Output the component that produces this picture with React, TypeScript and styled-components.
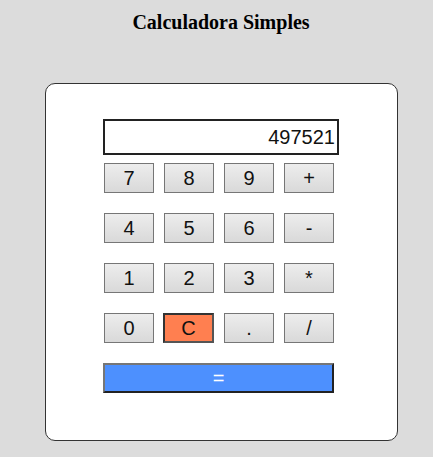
import React from "react";
import styled, { createGlobalStyle } from "styled-components";

const Global = createGlobalStyle`
  html, body { margin: 0; padding: 0; background: #dcdcdc; }
  body { font-family: "Liberation Serif", "Times New Roman", serif; }
`;

const Page = styled.div`
  width: 433px;
  height: 457px;
  display: flex;
  flex-direction: column;
  align-items: flex-start;
`;

const Title = styled.h3`
  align-self: stretch;
  margin: 11px 0 0 0;
  padding-left: 9px;
  height: 22px;
  line-height: 22px;
  text-align: center;
  font-family: "Liberation Serif", "Times New Roman", serif;
  font-weight: bold;
  font-size: 20px;
  color: #000;
`;

const Card = styled.div`
  box-sizing: border-box;
  margin: 50px 0 0 45px;
  width: 353px;
  height: 358px;
  background: #fff;
  border: 1px solid #333;
  border-radius: 10px;
  padding: 35px 0 0 57px;
  display: flex;
  flex-direction: column;
  align-items: flex-start;
`;

const Display = styled.div`
  box-sizing: border-box;
  width: 236px;
  height: 36px;
  border: 2px solid #222;
  padding: 0 2px 0 0;
  display: flex;
  align-items: center;
  justify-content: flex-end;
  font-family: "Liberation Sans", Arial, sans-serif;
  font-size: 20px;
  color: #111;
`;

const Keys = styled.div`
  margin: 8px 0 0 1px;
  display: grid;
  grid-template-columns: repeat(4, 50px);
  grid-auto-rows: 30px;
  column-gap: 10px;
  row-gap: 20px;
`;

const Key = styled.button<{ $clear?: boolean }>`
  box-sizing: border-box;
  margin: 0;
  padding: 0;
  font-family: "Liberation Sans", Arial, sans-serif;
  font-size: 20px;
  color: #111;
  cursor: pointer;
  ${(p) =>
    p.$clear
      ? `
    background: #ff7f50;
    border: 2px solid;
    border-color: #333 #555 #555 #333;
    margin-left: -1px;
    width: 51px;
  `
      : `
    background: linear-gradient(#ededed, #d9d9d9);
    border: 1px solid #767676;
  `}
`;

const Equals = styled.button`
  box-sizing: border-box;
  margin: 20px 0 0 0;
  width: 231px;
  height: 30px;
  padding: 0;
  background: #4d90fe;
  border: 2px solid;
  border-color: #767676 #222 #222 #767676;
  color: #fff;
  font-family: "Liberation Sans", Arial, sans-serif;
  font-size: 20px;
  cursor: pointer;
`;

const keys = ["7", "8", "9", "+", "4", "5", "6", "-", "1", "2", "3", "*", "0", "C", ".", "/"];

export default function App() {
  return (
    <Page>
      <Global />
      <Title>Calculadora Simples</Title>
      <Card>
        <Display>497521</Display>
        <Keys>
          {keys.map((k) => (
            <Key key={k} $clear={k === "C"}>
              {k}
            </Key>
          ))}
        </Keys>
        <Equals>=</Equals>
      </Card>
    </Page>
  );
}
